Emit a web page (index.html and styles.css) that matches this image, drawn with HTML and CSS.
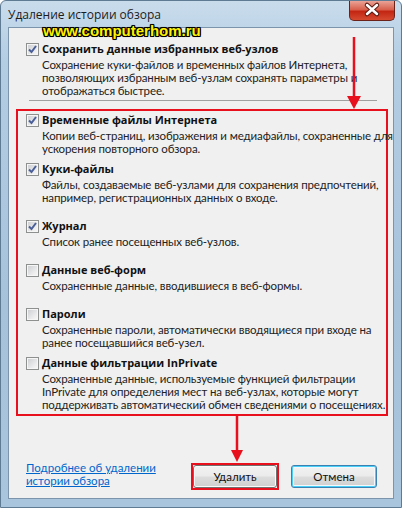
FILE: index.html
```html
<!DOCTYPE html>
<html lang="ru">

<head>
    <meta charset="UTF-8">
    <title>Удаление истории обзора</title>
    <link rel="stylesheet" href="styles.css">
</head>

<body>

    <div class="window">
        <div class="titlebar">
            <span class="title">Удаление истории обзора</span>
            <span class="close">
                <svg width="46" height="20" viewBox="0 0 46 20">
                    <path d="M18 5 L28 14 M28 5 L18 14" stroke="#5a1a12" stroke-width="4.5" stroke-linecap="round" />
                    <path d="M18 5 L28 14 M28 5 L18 14" stroke="#ffffff" stroke-width="2.5" stroke-linecap="round" />
                </svg>
            </span>
        </div>

        <div class="client">
            <div class="opt first">
                <span class="cb checked"></span>
                <div class="text">
                    <div class="name">Сохранить данные избранных веб-узлов</div>
                    <div class="desc">Сохранение куки-файлов и временных файлов Интернета,<br>позволяющих избранным веб-узлам сохранять параметры и<br>отображаться быстрее.</div>
                </div>
            </div>
            <div class="sep"></div>

            <div class="marked">
                <div class="opt">
                    <span class="cb checked"></span>
                    <div class="text">
                        <div class="name">Временные файлы Интернета</div>
                        <div class="desc">Копии веб-страниц, изображения и медиафайлы, сохраненные для<br>ускорения повторного обзора.</div>
                    </div>
                </div>
                <div class="opt near">
                    <span class="cb checked"></span>
                    <div class="text">
                        <div class="name">Куки-файлы</div>
                        <div class="desc">Файлы, создаваемые веб-узлами для сохранения предпочтений,<br>например, регистрационных данных о входе.</div>
                    </div>
                </div>
                <div class="opt far">
                    <span class="cb checked"></span>
                    <div class="text">
                        <div class="name">Журнал</div>
                        <div class="desc">Список ранее посещенных веб-узлов.</div>
                    </div>
                </div>
                <div class="opt far">
                    <span class="cb"></span>
                    <div class="text">
                        <div class="name">Данные веб-форм</div>
                        <div class="desc">Сохраненные данные, вводившиеся в веб-формы.</div>
                    </div>
                </div>
                <div class="opt far">
                    <span class="cb"></span>
                    <div class="text">
                        <div class="name">Пароли</div>
                        <div class="desc">Сохраненные пароли, автоматически вводящиеся при входе на<br>ранее посещавшийся веб-узел.</div>
                    </div>
                </div>
                <div class="opt near">
                    <span class="cb"></span>
                    <div class="text">
                        <div class="name">Данные фильтрации InPrivate</div>
                        <div class="desc">Сохраненные данные, используемые функцией фильтрации<br>InPrivate для определения мест на веб-узлах, которые могут<br>поддерживать автоматический обмен сведениями о посещениях.</div>
                    </div>
                </div>
            </div>

            <div class="footer">
                <a class="more" href="#">Подробнее об удалении<br>истории обзора</a>
                <div class="buttons">
                    <span class="mark"><button class="btn">Удалить</button></span>
                    <button class="btn focus">Отмена</button>
                </div>
            </div>
        </div>

        <div class="stamp">www.computerhom.ru</div>

        <svg class="arrows" width="402" height="508" viewBox="0 0 402 508">
            <line x1="353" y1="36" x2="353" y2="98" stroke="#e8101c" stroke-width="2.5" />
            <polygon points="346,95 360,95 353,108" fill="#e8101c" />
            <line x1="236" y1="414" x2="236" y2="452" stroke="#e8101c" stroke-width="2.5" />
            <polygon points="230,449 242,449 236,461" fill="#e8101c" />
        </svg>
    </div>

</body>

</html>
```

FILE: styles.css
```css
* {
    margin: 0;
    padding: 0;
    box-sizing: border-box;
}

body {
    font-family: Lato, "Open Sans", sans-serif;
    font-size: 11.5px;
    color: #1e1e1e;
    background: #ffffff;
}

.window {
    position: relative;
    width: 402px;
    height: 508px;
    padding: 0 7px 9px;
    background: linear-gradient(180deg, #c9dcec 0%, #b3cde3 12%, #a6c2db 60%, #a9c5de 100%);
    border: 1px solid #5f7a93;
    border-radius: 6px 6px 0 0;
}

.titlebar {
    display: flex;
    justify-content: space-between;
    align-items: flex-start;
    height: 26px;
}

.title {
    padding: 6px 0 0 0;
    font-family: "Open Sans", sans-serif;
    font-size: 12px;
    line-height: 16px;
    color: #1c1c1c;
}

.close {
    display: block;
    width: 46px;
    height: 20px;
    margin-right: -1px;
    border: 1px solid #6b2219;
    border-top: none;
    border-radius: 0 0 5px 5px;
    background: linear-gradient(180deg, #eaa396 0%, #d8604d 45%, #c32613 55%, #d64a30 100%);
}

.close svg {
    display: block;
    margin: -1px 0 0 -1px;
}

.client {
    height: 472px;
    border: 1px solid #7d95ac;
    background: #f0f0f0;
}

.opt {
    display: flex;
    gap: 3px;
}

.opt.first {
    padding: 14px 0 0 17px;
}

.opt.near {
    margin-top: 7px;
}

.opt.far {
    margin-top: 15px;
}

.cb {
    flex: none;
    width: 13px;
    height: 13px;
    margin-top: 1px;
    border: 1px solid #8e8f8f;
    background: linear-gradient(135deg, #c9cccf 0%, #eeeeef 70%, #f8f8f8 100%);
    box-shadow: inset 0 0 0 1px #f6f6f6;
}

.cb.checked {
    background-image: url("data:image/svg+xml,%3Csvg xmlns='http://www.w3.org/2000/svg' width='11' height='11'%3E%3Cpath d='M2 5.5 L4.5 8 L9 2' fill='none' stroke='%234a5e97' stroke-width='2'/%3E%3C/svg%3E"), linear-gradient(135deg, #c9cccf 0%, #eeeeef 70%, #f8f8f8 100%);
    background-repeat: no-repeat;
}

.name {
    font-family: "Open Sans", sans-serif;
    font-size: 11px;
    font-weight: bold;
    line-height: 14px;
    color: #111;
}

.desc {
    margin-top: 2px;
    line-height: 13px;
    color: #222;
    white-space: nowrap;
    letter-spacing: -0.12px;
}

.sep {
    height: 1px;
    margin: 3px 16px 0 20px;
    background: #a0a0a0;
}

.marked {
    margin: 8px 5px 0 7px;
    padding: 2px 0 3px 8px;
    border: 2px solid #e8101c;
}

.footer {
    display: flex;
    justify-content: space-between;
    align-items: flex-start;
    margin-top: 47px;
    padding: 0 16px 0 17px;
}

.more {
    margin-top: -2px;
    line-height: 13px;
    color: #0066cc;
}

.buttons {
    display: flex;
    align-items: center;
    gap: 12px;
}

.mark {
    display: block;
    border: 2px solid #e8101c;
}

.btn {
    display: block;
    width: 84px;
    height: 23px;
    font-family: Lato, "Open Sans", sans-serif;
    font-size: 11.5px;
    color: #111;
    border: 1px solid #707070;
    border-radius: 3px;
    background: linear-gradient(180deg, #f2f2f2 0%, #ebebeb 48%, #dddddd 52%, #cfcfcf 100%);
    box-shadow: inset 0 0 0 1px #fbfbfb;
}

.btn.focus {
    width: 86px;
    border-color: #3c7fb1;
    box-shadow: inset 0 0 0 1px #48d0f8, inset 0 0 0 2px #f4f8fb;
}

.stamp {
    position: absolute;
    left: 42px;
    top: 22px;
    font-family: "Liberation Sans", Arial, sans-serif;
    font-weight: bold;
    font-size: 15px;
    line-height: 15px;
    color: #fff200;
    text-shadow: -1px -1px 0 #000, 1px -1px 0 #000, -1px 1px 0 #000, 1px 1px 0 #000, 0 1px 0 #000, 0 -1px 0 #000, 1px 0 0 #000, -1px 0 0 #000, 0 0 2px #000;
}

.arrows {
    position: absolute;
    left: 0;
    top: 0;
    pointer-events: none;
}
```
